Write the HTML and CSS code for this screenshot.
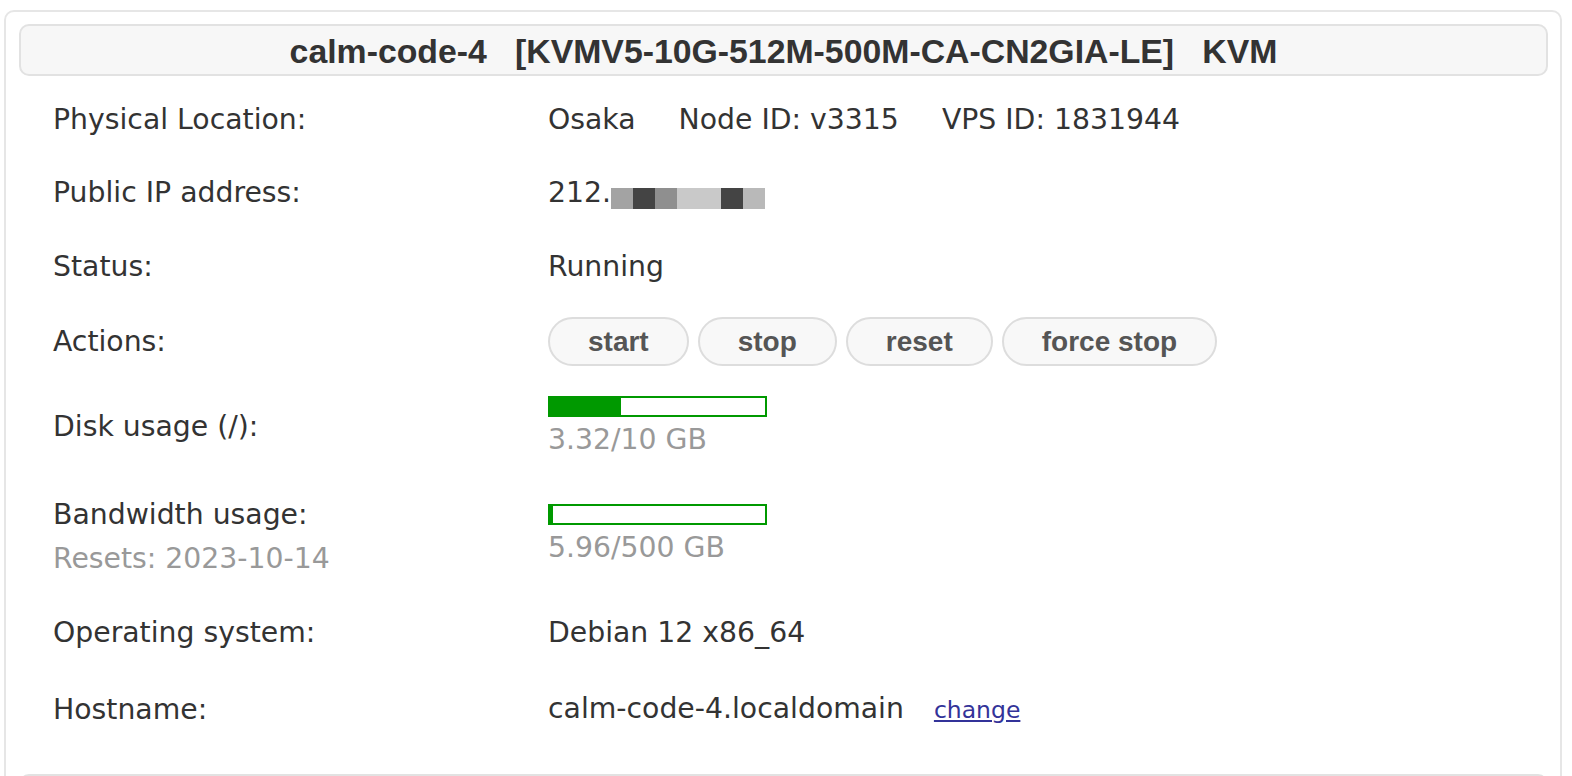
FILE: index.html
```html
<!DOCTYPE html>
<html lang="en">
<head>
<meta charset="utf-8">
<title>VPS control panel</title>
<link rel="stylesheet" href="styles.css">
</head>
<body>
<div class="panel">
  <div class="panel-title">calm-code-4&nbsp;&nbsp;&nbsp;[KVMV5-10G-512M-500M-CA-CN2GIA-LE]&nbsp;&nbsp;&nbsp;KVM</div>
  <div class="info">
    <div class="label">Physical Location:</div>
    <div class="value inline-group"><span>Osaka</span><span>Node ID: v3315</span><span>VPS ID: 1831944</span></div>

    <div class="label">Public IP address:</div>
    <div class="value">212.<span class="redact"><i class="px px1"></i><i class="px px2"></i><i class="px px3"></i><i class="px px4"></i><i class="px px4"></i><i class="px px2"></i><i class="px px5"></i></span></div>

    <div class="label">Status:</div>
    <div class="value">Running</div>

    <div class="label">Actions:</div>
    <div class="value buttons">
      <button class="btn">start</button>
      <button class="btn">stop</button>
      <button class="btn">reset</button>
      <button class="btn">force stop</button>
    </div>

    <div class="label">Disk usage (/):</div>
    <div class="value usage">
      <div class="bar"><div class="fill" style="width:33.2%"></div></div>
      <div class="muted">3.32/10 GB</div>
    </div>

    <div class="label label-stack">
      <div>Bandwidth usage:</div>
      <div class="muted">Resets: 2023-10-14</div>
    </div>
    <div class="value usage">
      <div class="bar"><div class="fill" style="width:1.2%"></div></div>
      <div class="muted">5.96/500 GB</div>
    </div>

    <div class="label">Operating system:</div>
    <div class="value">Debian 12 x86_64</div>

    <div class="label">Hostname:</div>
    <div class="value">calm-code-4.localdomain<a class="change" href="#">change</a></div>
  </div>
  <div class="panel-title next"></div>
</div>
</body>
</html>
```

FILE: styles.css
```css
html, body {
  margin: 0;
  padding: 0;
  background: #ffffff;
}

body {
  font-family: "DejaVu Sans", Verdana, sans-serif;
  font-size: 28.3px;
  color: #333333;
  overflow: hidden;
}

.panel {
  margin: 10px 10px 0 4px;
  padding: 12px 12px 0 13px;
  border: 2px solid #e6e6e6;
  border-radius: 10px;
  min-height: 800px;
}

.panel-title {
  background: #f7f7f7;
  border: 2px solid #e2e2e2;
  border-radius: 10px;
  height: 48px;
  line-height: 50px;
  text-align: center;
  font-family: "Liberation Sans", Arial, Helvetica, sans-serif;
  font-weight: bold;
  font-size: 33.8px;
  color: #333333;
  white-space: nowrap;
}

.panel-title.next {
  margin-top: 25px;
}

.info {
  display: grid;
  grid-template-columns: 495px 1fr;
  grid-template-rows: 74px 73px 74px 76px 94px 122px 74px 80px;
  align-items: center;
  margin-top: 6px;
  padding-left: 34px;
  line-height: 33px;
}

.label {
  white-space: nowrap;
}

.label-stack {
  line-height: 44px;
  padding-top: 6px;
}

.value {
  white-space: nowrap;
}

.inline-group {
  display: flex;
  gap: 43px;
}

.redact {
  display: inline-flex;
  vertical-align: -7px;
  height: 21px;
}

.px {
  display: block;
  width: 22px;
  height: 21px;
}

.px1 { background: #a3a3a3; }
.px2 { background: #444444; }
.px3 { background: #8f8f8f; }
.px4 { background: #c9c9c9; }
.px5 { background: #b9b9b9; }

.buttons {
  display: flex;
  gap: 9px;
}

.btn {
  height: 49px;
  padding: 0 38px;
  border: 2px solid #dddddd;
  border-radius: 25px;
  background: #f8f8f8;
  font-family: "Liberation Sans", Arial, Helvetica, sans-serif;
  font-weight: bold;
  font-size: 28px;
  color: #555555;
  line-height: 45px;
  cursor: pointer;
}

.usage {
  display: flex;
  flex-direction: column;
  align-items: flex-start;
}

.bar {
  width: 215px;
  height: 17px;
  border: 2px solid #009900;
  background: #ffffff;
  margin-bottom: 6px;
}

.fill {
  height: 100%;
  background: #009900;
}

.muted {
  color: #999999;
}

.change {
  margin-left: 30px;
  font-size: 23.5px;
  color: #333399;
  text-decoration: underline;
}
```
